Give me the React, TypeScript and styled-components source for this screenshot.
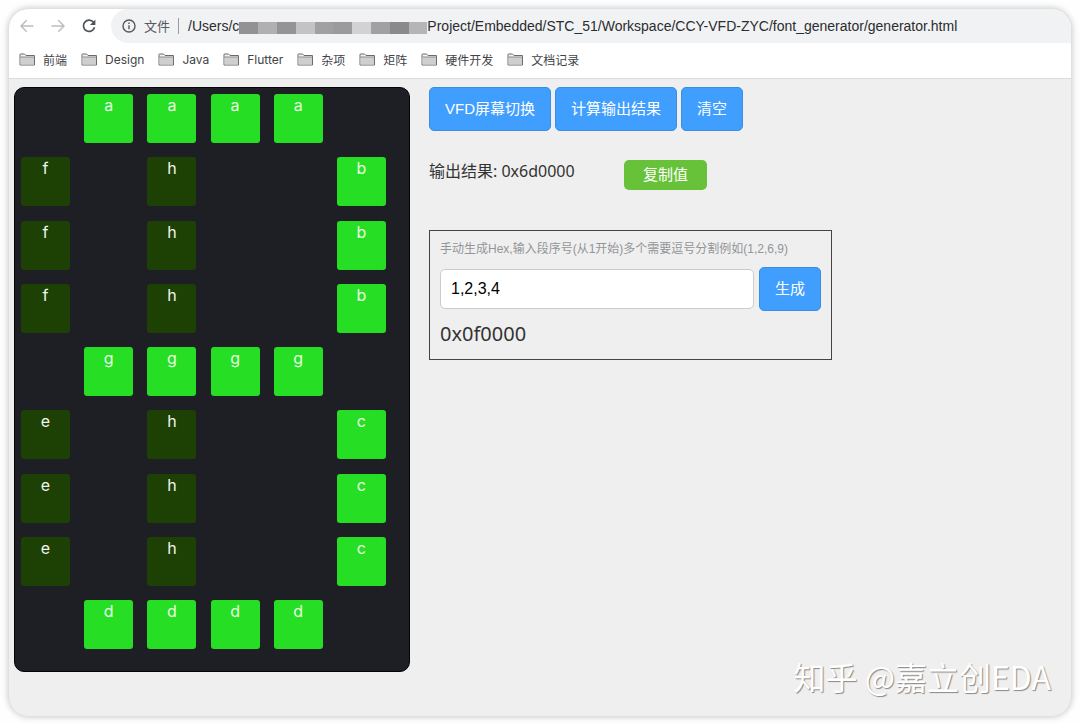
import React, { useState } from "react";
import styled, { createGlobalStyle } from "styled-components";

const GlobalStyle = createGlobalStyle`
  * { box-sizing: border-box; }
  body {
    margin: 0;
    background: #fefefe;
    color: #333;
    font-family: Inter, "Noto Sans CJK SC", sans-serif;
  }
`;

const Page = styled.div`
  min-height: 100vh;
  padding: 9px 9px 8px;
  display: flex;
`;

const Window = styled.div`
  position: relative;
  flex: 1;
  display: flex;
  flex-direction: column;
  overflow: hidden;
  border-radius: 20px;
  background: #efefef;
  box-shadow: 0 0 6px 1px rgba(0, 0, 0, 0.22);
`;

const Toolbar = styled.header`
  height: 34px;
  display: flex;
  background: #fff;
`;

const NavButtons = styled.nav`
  width: 102px;
  display: flex;
  align-items: center;
  gap: 11px;
  padding-left: 8px;
`;

const IconButton = styled.button<{ $dim?: boolean }>`
  width: 20px;
  height: 20px;
  padding: 0;
  border: 0;
  background: none;
  display: grid;
  place-items: center;
  color: ${(p) => (p.$dim ? "#bdbdbd" : "#505357")};
`;

const AddressBar = styled.div`
  flex: 1;
  display: flex;
  align-items: center;
  padding-left: 11px;
  border-radius: 17px 0 0 17px;
  background: #f1f2f4;
  color: #55585c;
  font-size: 13px;
  white-space: nowrap;
`;

const Scheme = styled.span`
  margin-left: 8px;
  padding-right: 8px;
  border-right: 1px solid #9a9c9f;
  line-height: 16px;
`;

const Url = styled.span`
  margin-left: 9px;
  display: flex;
  align-items: center;
  color: #2b2c2f;
  font-family: "Liberation Sans", sans-serif;
  font-size: 14px;
`;

const Redacted = styled.span`
  width: 188px;
  height: 12px;
  margin-top: 4px;
  display: flex;
`;

const Block = styled.span<{ $tone: string }>`
  flex: 1;
  background: ${(p) => p.$tone};
`;

const Bookmarks = styled.nav`
  height: 36px;
  display: flex;
  align-items: center;
  gap: 14px;
  padding: 0 10px 2px;
  background: #fff;
  border-bottom: 1px solid #dcdcdc;
`;

const Bookmark = styled.a`
  display: flex;
  align-items: center;
  gap: 7px;
  color: #414347;
  font-size: 12px;
  text-decoration: none;
`;

const Content = styled.main`
  display: flex;
  align-items: flex-start;
  gap: 19px;
  padding: 8px 5px;
`;

const Board = styled.section`
  padding: 6px 23px 22px 6px;
  border: 1px solid #050508;
  border-radius: 10px;
  background: #1e1f24;
`;

const Segments = styled.div`
  width: 365px;
  height: 555px;
  display: grid;
  grid-template-columns: repeat(6, 49px);
  grid-auto-rows: 49px;
  justify-content: space-between;
  align-content: space-between;
`;

const Segment = styled.button<{ $on: boolean }>`
  display: flex;
  justify-content: center;
  align-items: flex-start;
  padding: 1px 0 0;
  border: 0;
  border-radius: 3px;
  background: ${(p) => (p.$on ? "#26de23" : "#1d4005")};
  color: ${(p) => (p.$on ? "#e6fce4" : "#f2f5ee")};
  font: 16px/20px Inter, sans-serif;
`;

const Controls = styled.section`
  display: flex;
  flex-direction: column;
  align-items: flex-start;
`;

const ButtonRow = styled.div`
  display: flex;
  gap: 4px;
`;

const PrimaryButton = styled.button`
  height: 44px;
  padding: 0 15px;
  border: 1px solid #3a8ee0;
  border-radius: 5px;
  background: #409eff;
  color: #fff;
  font: 15px/20px "Liberation Sans", "Noto Sans CJK SC", sans-serif;
  white-space: nowrap;
`;

const ResultRow = styled.div`
  display: flex;
  gap: 50px;
  margin-top: 29px;
`;

const Result = styled.output`
  width: 145px;
  font: 16px/22px "Noto Sans", "Noto Sans CJK SC", sans-serif;
  white-space: nowrap;
`;

const CopyButton = styled.button`
  width: 83px;
  height: 30px;
  padding: 0;
  border: 0;
  border-radius: 5px;
  background: #67c23a;
  color: #fff;
  font: 15px/20px "Liberation Sans", "Noto Sans CJK SC", sans-serif;
`;

const Manual = styled.form`
  width: 403px;
  margin-top: 40px;
  padding: 9px 10px 12px;
  border: 1px solid #444;
  display: flex;
  flex-direction: column;
`;

const Hint = styled.label`
  color: #939598;
  font: 12px/18px "Liberation Sans", "Noto Sans CJK SC", sans-serif;
  white-space: nowrap;
`;

const InputRow = styled.div`
  display: flex;
  align-items: center;
  gap: 5px;
  margin-top: 9px;
`;

const Input = styled.input`
  flex: 1;
  min-width: 0;
  height: 40px;
  padding: 0 10px;
  border: 1px solid #ccc;
  border-radius: 5px;
  background: #fff;
  color: #000;
  font: 16px/20px "Liberation Sans", sans-serif;
`;

const HexOutput = styled.output`
  margin-top: 10px;
  font: 20px/26px "Noto Sans", sans-serif;
`;

const Watermark = styled.div`
  position: absolute;
  right: 20px;
  bottom: 18px;
  color: #fff;
  font: 32px/44px "Noto Sans CJK SC", sans-serif;
  text-shadow: 1px 1px 1px #888;
  white-space: nowrap;
`;

const bookmarks = ["前端", "Design", "Java", "Flutter", "杂项", "矩阵", "硬件开发", "文档记录"];

const tones = ["#929294", "#b0b0b2", "#949496", "#c3c3c5", "#a0a0a2", "#9b9b9d", "#d2d2d4", "#a1a1a3", "#8a8a8c", "#b5b5b7"];

const rows = [" aaaa ", "f h  b", "f h  b", "f h  b", " gggg ", "e h  c", "e h  c", "e h  c", " dddd "];

const lit = "abcdg";

const Folder = () => (
  <svg width="17" height="13" viewBox="0 0 17 13" fill="none">
    <path d="M1 12V1.5Q1 1 1.5 1H5.5L7 2.5H15.5V12Z" fill="#f3f3f3" stroke="#6b6b6b" />
    <path d="M1.5 4H15V11.5H1.5Z" fill="#cfcfcf" />
    <path d="M1 4H15.5" stroke="#8d8d8d" />
  </svg>
);

const Arrow = ({ forward = false }: { forward?: boolean }) => (
  <svg width="14" height="14" viewBox="0 0 14 14" fill="none" stroke="currentColor" strokeWidth="1.5">
    <path d={forward ? "M0.5 7H13M7.3 1.3L13 7L7.3 12.7" : "M13.5 7H1M6.7 1.3L1 7L6.7 12.7"} />
  </svg>
);

const Reload = () => (
  <svg width="14" height="14" viewBox="0 0 14 14" fill="none">
    <path d="M11.6 3.5A5.6 5.6 0 1 0 12.5 8.2" stroke="currentColor" strokeWidth="1.7" />
    <path d="M13.4 0.6V6H8Z" fill="currentColor" />
  </svg>
);

const Info = () => (
  <svg width="14" height="14" viewBox="0 0 14 14" fill="none" stroke="currentColor" strokeWidth="1.4">
    <circle cx="7" cy="7" r="6" />
    <path d="M7 6.2V10.2M7 3.6V5" />
  </svg>
);

export default function App() {
  const [value, setValue] = useState("1,2,3,4");
  return (
    <>
      <GlobalStyle />
      <Page>
        <Window>
          <Toolbar>
            <NavButtons>
              <IconButton $dim aria-label="后退"><Arrow /></IconButton>
              <IconButton $dim aria-label="前进"><Arrow forward /></IconButton>
              <IconButton aria-label="重新加载"><Reload /></IconButton>
            </NavButtons>
            <AddressBar>
              <Info />
              <Scheme>文件</Scheme>
              <Url>
                <span>/Users/c</span>
                <Redacted>{tones.map((t, i) => <Block key={i} $tone={t} />)}</Redacted>
                <span>Project/Embedded/STC_51/Workspace/CCY-VFD-ZYC/font_generator/generator.html</span>
              </Url>
            </AddressBar>
          </Toolbar>
          <Bookmarks>
            {bookmarks.map((name) => (
              <Bookmark key={name} href="#"><Folder />{name}</Bookmark>
            ))}
          </Bookmarks>
          <Content>
            <Board>
              <Segments>
                {rows.flatMap((row, r) =>
                  row.split("").map((s, c) =>
                    s === " " ? <span key={`${r}-${c}`} /> : (
                      <Segment key={`${r}-${c}`} type="button" $on={lit.includes(s)}>{s}</Segment>
                    )
                  )
                )}
              </Segments>
            </Board>
            <Controls>
              <ButtonRow>
                <PrimaryButton>VFD屏幕切换</PrimaryButton>
                <PrimaryButton>计算输出结果</PrimaryButton>
                <PrimaryButton>清空</PrimaryButton>
              </ButtonRow>
              <ResultRow>
                <Result>输出结果: 0x6d0000</Result>
                <CopyButton>复制值</CopyButton>
              </ResultRow>
              <Manual onSubmit={(e) => e.preventDefault()}>
                <Hint htmlFor="segments">手动生成Hex,输入段序号(从1开始)多个需要逗号分割例如(1,2,6,9)</Hint>
                <InputRow>
                  <Input id="segments" value={value} onChange={(e) => setValue(e.target.value)} />
                  <PrimaryButton>生成</PrimaryButton>
                </InputRow>
                <HexOutput>0x0f0000</HexOutput>
              </Manual>
            </Controls>
          </Content>
          <Watermark>知乎 @嘉立创EDA</Watermark>
        </Window>
      </Page>
    </>
  );
}
